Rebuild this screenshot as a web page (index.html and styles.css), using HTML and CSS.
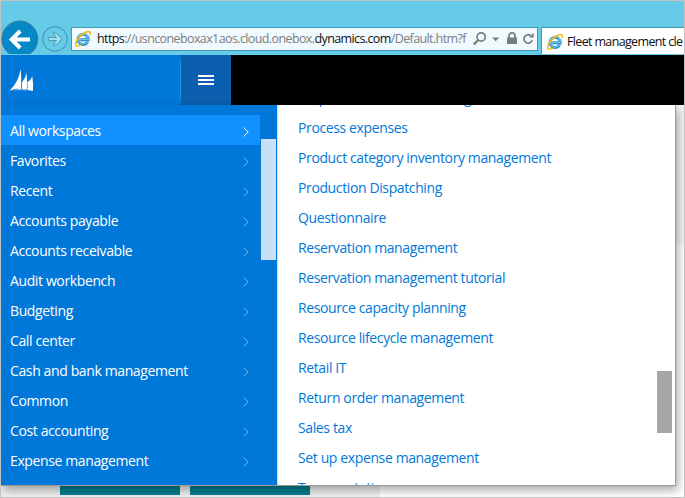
FILE: index.html
```html
<!DOCTYPE html>
<html lang="en">
<head>
<meta charset="utf-8">
<title>Fleet management</title>
<link rel="stylesheet" href="styles.css">
</head>
<body>
<svg class="defs" aria-hidden="true">
  <symbol id="ie" viewBox="0 0 16 16">
    <path d="M12.7 10.6A5.1 5.1 0 1 1 13.2 8.700H5.300" fill="none" stroke="#2b8fcb" stroke-width="3"/>
    <path d="M12.6 10.4A5.1 5.1 0 1 1 13.2 8.500H5.300" fill="none" stroke="#6fc3ec" stroke-width="1.2"/>
    <path d="M2.7 15.2C-.8 15.3.4 10.5 4.2 6.3 8.2 1.8 14-.8 15 1.2c.4.8.2 1.8-.3 2.9" fill="none" stroke="#f6b90d" stroke-width="1.6"/>
    <path d="M2.7 15.2c1.2 0 2.3-.6 3.3-1.3" fill="none" stroke="#f6b90d" stroke-width="1.3"/>
  </symbol>
  <symbol id="chev" viewBox="0 0 6 10"><path d="M.6.6 5.2 5 .6 9.4" fill="none" stroke="currentColor"/></symbol>
</svg>
<div class="window">
  <header class="browser">
    <svg class="back" width="38" height="34" viewBox="0 0 38 34">
      <circle cx="18.8" cy="19" r="18" fill="#0687c6" stroke="#3c7f99"/>
      <path d="M29 19.500H12M19.200 11 10.700 19.500l8.500 8.500" fill="none" stroke="#fff" stroke-width="4"/>
    </svg>
    <svg class="forward" width="26" height="26" viewBox="0 0 26 26">
      <circle cx="13" cy="13" r="12.3" fill="none" stroke="#438fa9"/>
      <path d="M6.500 11.500h8l-3.500-4.500h3l6 6-6 6h-3l3.500-4.500h-8z" fill="#a5dff4" stroke="#4893ad" stroke-width=".9"/>
    </svg>
    <div class="address">
      <svg class="ie" width="16" height="16"><use href="#ie"/></svg>
      <div class="url"><b>https</b>://usnconeboxax1aos.cloud.onebox.<b>dynamics.com</b>/Default.htm?f</div>
      <svg class="tools" width="62" height="16" viewBox="0 0 62 16" fill="none" stroke="#777d7f">
        <circle cx="8.2" cy="6" r="4.1" stroke-width="1.7"/><path d="M5.3 9 .8 13.4" stroke-width="2.4"/>
        <path d="M19.2 6.500h7l-3.500 3.700z" fill="#777d7f" stroke="none"/>
        <path d="M34 6.500h10V13H34z" fill="#777d7f" stroke="none"/><path d="M36 7V4.800a3 3 0 0 1 6 0V7" stroke-width="1.7"/>
        <path d="M59.2 9.200a4.200 4.200 0 1 1-1.600-4.800" stroke-width="1.8"/><path d="M56 6.500h4.600V1.800z" fill="#777d7f" stroke="none"/>
      </svg>
    </div>
    <div class="tab">
      <svg class="ie" width="16" height="16"><use href="#ie"/></svg>
      <span>Fleet management cle</span>
    </div>
  </header>
  <nav class="topbar">
    <div class="brand">
      <svg width="25" height="23" viewBox="0 0 25 23" fill="#fff">
        <path d="M11.700 0Q12.600 10 12 20.300 6.500 18.600.5 21.700 9.500 13.500 11.700 0z"/>
        <path d="M17.500 4Q18.600 12 17.800 20.700L12.900 20v-6.500Q16.500 9.500 17.500 4z"/>
        <path d="M23.300 7.500Q24.500 14 24 22l-5.500-1v-8Q22 11 23.300 7.500z"/>
        <path d="M0 22q9-3.300 18.500-.6Q9 20.300 0 22z" fill="#b8d9f6"/>
      </svg>
      <i class="divider"></i>
    </div>
    <button class="burger" aria-label="Menu"><i></i><i></i><i></i></button>
  </nav>
  <main class="page">
    <div class="canvas"><div class="tiles"><i></i><i></i></div></div>
    <div class="menu">
      <div class="modules">
        <ul>
          <li class="on">All workspaces<svg><use href="#chev"/></svg></li>
          <li>Favorites<svg><use href="#chev"/></svg></li>
          <li>Recent<svg><use href="#chev"/></svg></li>
          <li>Accounts payable<svg><use href="#chev"/></svg></li>
          <li>Accounts receivable<svg><use href="#chev"/></svg></li>
          <li>Audit workbench<svg><use href="#chev"/></svg></li>
          <li>Budgeting<svg><use href="#chev"/></svg></li>
          <li>Call center<svg><use href="#chev"/></svg></li>
          <li>Cash and bank management<svg><use href="#chev"/></svg></li>
          <li>Common<svg><use href="#chev"/></svg></li>
          <li>Cost accounting<svg><use href="#chev"/></svg></li>
          <li>Expense management<svg><use href="#chev"/></svg></li>
        </ul>
        <i class="thumb"></i>
      </div>
      <div class="links">
        <ul>
          <li>Prepare master data management</li>
          <li>Process expenses</li>
          <li>Product category inventory management</li>
          <li>Production Dispatching</li>
          <li>Questionnaire</li>
          <li>Reservation management</li>
          <li>Reservation management tutorial</li>
          <li>Resource capacity planning</li>
          <li>Resource lifecycle management</li>
          <li>Retail IT</li>
          <li>Return order management</li>
          <li>Sales tax</li>
          <li>Set up expense management</li>
          <li>Transportation</li>
        </ul>
        <i class="thumb"></i>
      </div>
    </div>
  </main>
</div>
</body>
</html>
```
FILE: styles.css
```css
* { box-sizing: border-box; }
body { margin: 0; font: 14px/30px "Open Sans", "Noto Sans", sans-serif; letter-spacing: -0.38px; }
ul { list-style: none; margin: 0; padding: 0; }
.defs { display: none; }
.window { width: 685px; height: 498px; border: 1px solid #c3c3c3; display: flex; flex-direction: column; overflow: hidden; background: #fff; }

.browser { height: 54px; flex: none; display: flex; align-items: flex-start; background: #66cae9; overflow: hidden; }
.back { flex: none; margin: 19px 0 0; }
.forward { flex: none; margin: 25px 0 0 3px; }
.address { flex: none; width: 467px; height: 24px; margin: 26px 0 0 3px; padding: 0 8px 0 3px; display: flex; align-items: center; background: #f0f9fd; border: 1px solid #4797b1; }
.ie { flex: none; }
.url { flex: none; width: 377px; margin-left: 6px; line-height: 22px; color: #7c8082; white-space: nowrap; font-size: 12.5px; letter-spacing: -0.61px; }
.url b { font-weight: 400; color: #111; }
.tools { flex: none; margin-left: -1px; }
.tab { flex: none; width: 150px; height: 27px; margin: 26px 0 0 3px; padding: 2px 0 0 5px; display: flex; align-items: center; gap: 4px; background: #fff; border: 1px solid #4797b1; border-bottom: 0; color: #111; white-space: nowrap; font-size: 12.5px; letter-spacing: -0.65px; }

.topbar { height: 50px; flex: none; display: flex; background: #000; }
.brand { width: 180px; padding: 14px 0 0 8px; display: flex; justify-content: space-between; background: #0078d9; }
.divider { width: 1px; height: 40px; margin-top: -9px; background: #2a8de0; }
.burger { width: 50px; border: 0; padding: 0; display: flex; flex-direction: column; align-items: center; justify-content: center; gap: 2px; background: #0c5eae; }
.burger i { width: 16px; height: 2px; background: #fff; }

.page { flex: 1; position: relative; background: linear-gradient(#f5f5f5 140px, #fff 140px); }
.canvas { width: 379px; height: 100%; display: flex; align-items: flex-end; background: #f0f0f0; }
.tiles { display: flex; gap: 10px; padding: 0 0 2px 59px; }
.tiles i { width: 120px; height: 30px; background: #007f91; }

.menu { position: absolute; top: 0; left: 0; width: 675px; height: 381px; display: flex; background: #fff; border: solid #999; border-width: 0 1px 1px 0; box-shadow: 2px 4px 9px rgba(0, 0, 0, .35); }
.modules { width: 276px; display: flex; gap: 1px; background: #0078d9; box-shadow: 1px 0 #c6e0f6; }
.modules ul { width: 259px; padding-top: 10px; }
.modules li { height: 30px; line-height: 30px; padding: 2px 11px 0 9px; display: flex; justify-content: space-between; align-items: center; color: #fff; }
.modules .on { background: #1191ff; }
.modules svg { width: 6px; height: 10px; margin-top: 2px; color: #78b7ed; }
.modules .on svg { color: #fff; }
.modules .thumb { width: 15px; height: 121px; margin-top: 34px; background: #c9dff4; }
.links { flex: 1; display: flex; justify-content: space-between; overflow: hidden; padding: 0 3px 0 21px; }
.links ul { margin-top: -22px; color: #0078d9; white-space: nowrap; }
.links li { height: 30px; }
.links .thumb { width: 15px; height: 62px; margin-top: 266px; background: #a6a6a6; }
```
